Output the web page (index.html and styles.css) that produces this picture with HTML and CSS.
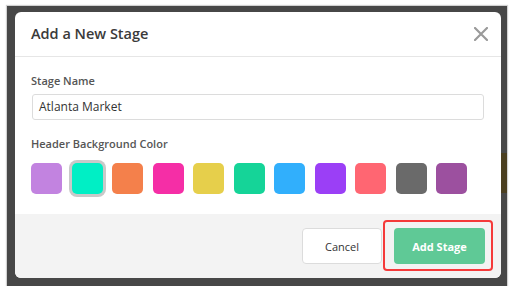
FILE: index.html
```html
<!DOCTYPE html>
<html lang="en">
<head>
  <meta charset="UTF-8">
  <title>Add a New Stage</title>
  <link rel="stylesheet" href="styles.css">
</head>
<body>

<div class="shot">
  <div class="modal">
    <div class="modal-header">
      <h2>Add a New Stage</h2>
      <svg class="close" width="14" height="14" viewBox="0 0 14 14">
        <path d="M1 1 L13 13 M13 1 L1 13" stroke="#9a9a9a" stroke-width="2.2" stroke-linecap="round"/>
      </svg>
    </div>

    <div class="modal-body">
      <label class="field-label">Stage Name</label>
      <div class="text-input">Atlanta Market</div>

      <label class="field-label second">Header Background Color</label>
      <div class="swatches">
        <span class="swatch" style="background:#c283e0"></span>
        <span class="swatch selected" style="background:#00efc5"></span>
        <span class="swatch" style="background:#f4804b"></span>
        <span class="swatch" style="background:#f52ea6"></span>
        <span class="swatch" style="background:#e6cf4b"></span>
        <span class="swatch" style="background:#15d498"></span>
        <span class="swatch" style="background:#31affc"></span>
        <span class="swatch" style="background:#9b3ff6"></span>
        <span class="swatch" style="background:#ff6672"></span>
        <span class="swatch" style="background:#6a6a6a"></span>
        <span class="swatch" style="background:#9c509f"></span>
      </div>
    </div>

    <div class="modal-footer">
      <button class="btn btn-cancel">Cancel</button>
      <div class="highlight-wrap">
        <button class="btn btn-add">Add Stage</button>
        <span class="highlight"></span>
      </div>
    </div>
  </div>
</div>

</body>
</html>
```

FILE: styles.css
```css
body {
  margin: 0;
  background: #fff;
  font-family: "Open Sans", Arial, sans-serif;
}

.shot {
  margin: 6px 7px 0 7px;
  height: 280px;
  padding: 6px 6px 0 8px;
  box-sizing: border-box;
  background:
    linear-gradient(#4a3e1f, #4a3e1f) right 0 top 147px / 6px 40px no-repeat,
    #474747;
  box-shadow: 0 0 1px 1px rgba(0, 0, 0, 0.18);
}

.modal {
  background: #fff;
  border-radius: 6px;
  height: 266px;
  display: flex;
  flex-direction: column;
  overflow: hidden;
}

.modal-header {
  display: flex;
  justify-content: space-between;
  align-items: center;
  padding: 12px 13px 12px 16px;
  border-bottom: 1px solid #e6e6e6;
}
.modal-header h2 {
  margin: 0;
  font-size: 14.5px;
  line-height: 20px;
  font-weight: 600;
  color: #3a3a3a;
}

.modal-body {
  padding: 16px 17px 20px 17px;
}
.field-label {
  display: block;
  font-size: 11px;
  line-height: 15px;
  font-weight: 600;
  color: #555;
  margin-left: -1px;
}
.field-label.second {
  margin-top: 16px;
}
.text-input {
  margin-top: 6px;
  height: 24px;
  border: 1px solid #dcdcdc;
  border-radius: 3px;
  padding: 0 6px;
  font-size: 12px;
  line-height: 24px;
  color: #333;
}

.swatches {
  display: flex;
  gap: 9.5px;
  margin-top: 12px;
  margin-left: -1px;
}
.swatch {
  width: 31px;
  height: 31px;
  border-radius: 5px;
}
.swatch.selected {
  box-shadow: 0 0 0 3px #c9c9c9;
}

.modal-footer {
  flex: 1;
  background: #f3f3f3;
  display: flex;
  justify-content: flex-end;
  align-items: flex-start;
  gap: 12px;
  padding: 14px 16px;
}
.btn {
  font-family: "Open Sans", Arial, sans-serif;
  font-size: 11px;
  height: 36px;
  border-radius: 4px;
  cursor: pointer;
}
.btn-cancel {
  width: 80px;
  background: #fff;
  border: 1px solid #dcdcdc;
  color: #333;
}
.btn-add {
  width: 91px;
  background: #5fc996;
  border: none;
  color: #fff;
  font-weight: 700;
  display: block;
}

.highlight-wrap {
  position: relative;
}
.highlight {
  position: absolute;
  left: -11px;
  top: -8px;
  right: -8px;
  bottom: -7px;
  border: 2px solid #f53a3a;
  border-radius: 4px;
}
```
